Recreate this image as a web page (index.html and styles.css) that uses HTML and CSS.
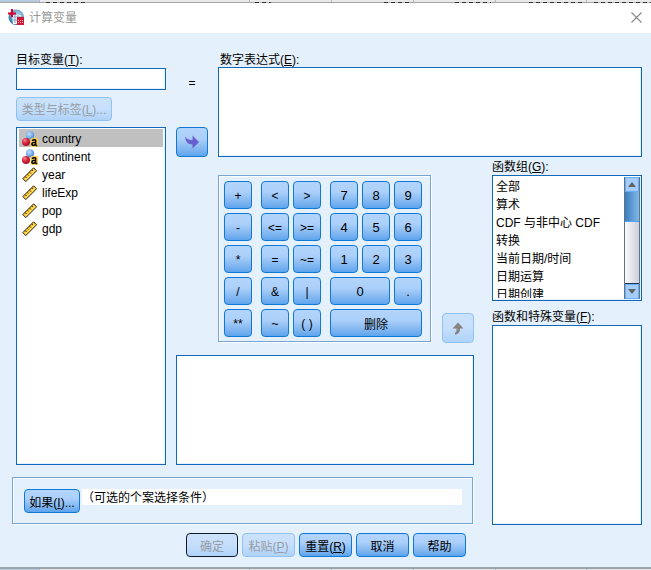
FILE: index.html
```html
<!DOCTYPE html>
<html lang="zh-CN">
<head>
<meta charset="utf-8">
<title>计算变量</title>
<link rel="stylesheet" href="styles.css">
</head>
<body>
<svg class="defs" width="0" height="0" aria-hidden="true">
  <defs>
    <radialGradient id="red" cx=".35" cy=".3" r=".75"><stop offset="0" stop-color="#f58b98"/><stop offset=".45" stop-color="#d92842"/><stop offset="1" stop-color="#a50c24"/></radialGradient>
    <radialGradient id="blue" cx=".4" cy=".35" r=".7"><stop offset="0" stop-color="#c4e0fb"/><stop offset=".6" stop-color="#76adea"/><stop offset="1" stop-color="#3c7ac6"/></radialGradient>
    <radialGradient id="globe" cx=".6" cy=".35" r=".7"><stop offset="0" stop-color="#b4d6ec"/><stop offset="1" stop-color="#2e71a8"/></radialGradient>
    <symbol id="nominal" viewBox="0 0 16 16">
      <circle cx="8" cy="4.3" r="4.1" fill="url(#blue)"/>
      <circle cx="4" cy="11" r="4" fill="url(#red)"/>
      <rect x="8.6" y="7" width="7.4" height="9" rx="1.5" fill="#ffd047"/>
      <path d="M10 9.6Q12 8 13.6 9.2V14.6M13.6 11.6H11.4Q9.8 11.8 9.9 13.2Q10.4 14.8 12.2 14.2L13.6 13M13.6 14.5H15.3" fill="none" stroke="#000" stroke-width="1.5"/>
    </symbol>
    <symbol id="scale" viewBox="0 0 16 16">
      <path d="M.8 11.6 11.6.8 14.6 3.8 3.8 14.6Z" fill="#ffcb2e" stroke="#222" stroke-width="1"/>
      <path d="M3.2 9.6 4.6 11M5.4 7.4 6.4 8.4M7.6 5.2 9 6.6M9.8 3 10.8 4" stroke="#222" stroke-width="1"/>
      <path d="M3.6 12.8 12.8 3.6" stroke="#fff3a9" stroke-dasharray="2 1"/>
    </symbol>
  </defs>
</svg>
<div class="sheet sheet-top"><i class="head"></i><i class="c1"><b class="ink short"></b></i><i class="c2"><b class="ink tiny"></b></i><i class="c3"><b class="ink year"></b></i><i class="c4"><b class="ink num"></b></i><i class="c5"><b class="ink long"></b></i><i class="c6"><b class="ink wide"></b></i></div>
<header class="titlebar">
  <svg class="app" width="17" height="17" viewBox="0 0 17 17">
    <circle cx="8.3" cy="8.3" r="7.8" fill="url(#globe)"/>
    <path d="M4 6H13V15H5Z" fill="#edf5fb"/>
    <path d="M5 8H13M5 11H10M7 6V14M10 6V13" stroke="#8cacc6"/>
    <path d="M0 4.5H8M4 0V8" stroke="#d9002b" stroke-width="2"/>
    <path d="M9 8H16V16H9Z" fill="#d01837"/>
    <path d="M10 11.5H16M10 13.5H16" stroke="#f3bcc5" stroke-dasharray="1 1"/>
  </svg>
  <h1>计算变量</h1>
  <svg class="close" width="11" height="11" viewBox="0 0 11 11"><path d="M.5.5 10.5 10.5M10.5.5.5 10.5" stroke="#888" stroke-width="1.1"/></svg>
</header>
<main>
  <section class="variables">
    <label>目标变量(<u>T</u>):</label>
    <div class="box target"></div>
    <button class="btn off type">类型与标签(<u>L</u>)...</button>
    <ul class="box varlist">
      <li class="selected"><svg><use href="#nominal"/></svg>country</li>
      <li><svg><use href="#nominal"/></svg>continent</li>
      <li><svg><use href="#scale"/></svg>year</li>
      <li><svg><use href="#scale"/></svg>lifeExp</li>
      <li><svg><use href="#scale"/></svg>pop</li>
      <li><svg><use href="#scale"/></svg>gdp</li>
    </ul>
  </section>
  <section class="expression">
    <div class="assign"><span>=</span>
      <button class="btn arrow" aria-label="移动"><svg width="16" height="14" viewBox="0 0 16 14"><path d="M1 1.5Q3 5 8.5 5V.5L15 7 8.5 13.5V9.5Q1.5 9.5 1 1.5Z" fill="#6860cf"/></svg></button>
    </div>
    <div class="formula"><label>数字表达式(<u>E</u>):</label><div class="box formula-box"></div></div>
  </section>
  <section class="operators">
    <div class="pad-row">
      <div class="frame keypad">
        <div class="keys one"><button class="btn">+</button><button class="btn">-</button><button class="btn">*</button><button class="btn">/</button><button class="btn">**</button></div>
        <div class="keys two"><button class="btn">&lt;</button><button class="btn">&gt;</button><button class="btn">&lt;=</button><button class="btn">&gt;=</button><button class="btn">=</button><button class="btn">~=</button><button class="btn">&amp;</button><button class="btn">|</button><button class="btn">~</button><button class="btn">( )</button></div>
        <div class="keys three"><button class="btn">7</button><button class="btn">8</button><button class="btn">9</button><button class="btn">4</button><button class="btn">5</button><button class="btn">6</button><button class="btn">1</button><button class="btn">2</button><button class="btn">3</button><button class="btn zero">0</button><button class="btn">.</button><button class="btn delete">删除</button></div>
      </div>
      <button class="btn off arrow" aria-label="上移"><svg width="12" height="13" viewBox="0 0 12 13"><path d="M6 .5 11.5 6.5H8Q8.5 11.5 3 12.8V11Q5 10 4.6 6.5H.5Z" fill="#858585"/></svg></button>
    </div>
    <div class="box description"></div>
  </section>
  <section class="functions">
    <label>函数组(<u>G</u>):</label>
    <div class="box groups">
      <ul><li>全部</li><li>算术</li><li>CDF 与非中心 CDF</li><li>转换</li><li>当前日期/时间</li><li>日期运算</li><li>日期创建</li></ul>
      <div class="scroll"><i class="step up"></i><i class="thumb"></i><i class="track"></i><i class="step down"></i></div>
    </div>
    <label class="special">函数和特殊变量(<u>F</u>):</label>
    <div class="box specials"></div>
  </section>
  <section class="frame condition"><button class="btn">如果(<u>I</u>)...</button><div class="hint">（可选的个案选择条件）</div></section>
</main>
<footer>
  <button class="btn off default">确定</button>
  <button class="btn off">粘贴(<u>P</u>)</button>
  <button class="btn">重置(<u>R</u>)</button>
  <button class="btn">取消</button>
  <button class="btn">帮助</button>
</footer>
<div class="sheet sheet-bottom"><i class="head"></i><i class="c1"></i><i class="c2"></i><i class="c3"></i><i class="c4"></i><i class="c5"></i><i class="c6"></i></div>
</body>
</html>
```
FILE: styles.css
```css
* { box-sizing: border-box; }
body {
  margin: 0; width: 651px; height: 570px; overflow: hidden;
  display: flex; flex-direction: column;
  background: #e4f0fc; color: #000;
  font: 12px/16px "Liberation Sans", "Noto Sans CJK SC", sans-serif;
}
.defs { position: absolute; }
ul { list-style: none; margin: 0; padding: 0; }
u { text-underline-offset: 1px; text-decoration-thickness: 1px; }
label { display: block; height: 16px; white-space: nowrap; }

.sheet { display: flex; height: 3px; flex: none; background: #e9e9e9; }
.sheet i { display: block; height: 100%; border-right: 1px solid #a9bccd; }
.sheet-top { border-bottom: 1px solid #a6a6a6; }
.sheet-bottom { border-top: 2px solid #9ca4ab; margin-top: auto; }
.sheet .head { width: 40px; background: #b9cbdf; }
.sheet .c1 { width: 210px; }
.sheet .c2 { width: 82px; }
.sheet .c3 { width: 82px; }
.sheet .c4 { width: 82px; }
.sheet .c5 { width: 91px; }
.sheet .c6 { flex: 1; border: 0; }
.ink { display: block; height: 1px; margin: 2px 4px 0 auto; background: repeating-linear-gradient(90deg, #333 0 4px, #bbb 4px 7px); }
.short { width: 40px; margin-left: 6px; }
.tiny { width: 16px; margin-left: 5px; }
.year { width: 25px; }
.num { width: 36px; }
.long { width: 53px; }
.wide { width: 57px; margin-right: 0; }

.titlebar { height: 30px; flex: none; display: flex; align-items: center; background: #fff; padding: 0 9px 0 8px; color: #999; }
.titlebar h1 { margin: 0 auto 0 4px; font-size: 12px; font-weight: 400; }
.titlebar .app { margin-bottom: 2px; }
.titlebar .close { margin-bottom: 2px; }

main {
  display: grid; margin: 17px 9px 0 12px; height: 475px; flex: none;
  grid-template-columns: 154px 10px 298px 18px 150px;
  grid-template-rows: 108px 307px 12px 48px;
}
.variables { grid-area: 1 / 1 / 3 / 2; padding-left: 4px; display: flex; flex-direction: column; }
.expression { grid-area: 1 / 3 / 2 / 6; display: flex; gap: 10px; }
.operators { grid-area: 2 / 3 / 3 / 4; padding-top: 17px; }
.functions { grid-area: 2 / 5 / 5 / 6; }
.condition { grid-area: 4 / 1 / 5 / 4; }

.box { background: #fff; border: 1px solid #1468b8; box-shadow: inset -1px -1px #e4f0fc; }
.frame { border: 1px solid #76a5d5; box-shadow: inset 1px 1px #fff, 1px 1px #fff; }
.btn {
  display: flex; align-items: center; justify-content: center;
  padding: 2px 0 0; border: 1px solid #0f79d8; border-radius: 4px;
  background: linear-gradient(#b3d4fb, #acd0fa 38%, #7cb3ef 80%, #5ca4ed);
  color: #000; font: inherit; white-space: pre;
}
.off { color: #969da5; border-color: #8fc1f1; background: linear-gradient(#cbe2fc, #c6dffb 50%, #aed3fa); }

.variables label { padding-top: 2px; height: 18px; }
.target { height: 22px; }
.type { width: 96px; height: 24px; margin: 7px 0 6px; }
.varlist { height: 338px; padding: 1px 2px; }
.varlist li { height: 18px; display: flex; align-items: center; gap: 4px; padding: 2px 0 0 3px; line-height: 16px; }
.varlist svg { width: 16px; height: 16px; flex: none; }
.selected { background: #c0c0c0; }

.assign { width: 32px; display: flex; flex-direction: column; justify-content: space-between; align-items: center; padding: 25px 0 1px; }
.arrow { width: 32px; height: 30px; flex: none; padding: 0; }
.formula { flex: 1; }
.formula label { height: 17px; padding: 2px 0 0 2px; }
.formula-box { height: 90px; }

.pad-row { display: flex; align-items: flex-end; justify-content: space-between; padding-left: 42px; height: 168px; }
.keypad { width: 213px; height: 167px; display: flex; gap: 9px; padding: 5px; margin-bottom: 1px; }
.keys { display: grid; gap: 4px; grid-auto-rows: 28px; align-content: start; }
.keys .btn { padding-top: 1px; }
.one { grid-template-columns: 28px; }
.two { grid-template-columns: repeat(2, 28px); }
.three { grid-template-columns: repeat(3, 28px); font-size: 13px; }
.zero { grid-column: span 2; }
.keys .delete { grid-column: span 3; font-size: 12px; padding-top: 3px; }
.description { height: 110px; margin-top: 12px; }

.functions label { height: 17px; padding-top: 1px; }
.groups { display: flex; justify-content: space-between; height: 126px; padding: 1px; }
.groups ul { height: 121px; overflow: hidden; padding: 1px 0 0 2px; }
.groups li { height: 18px; line-height: 18px; white-space: nowrap; }
.scroll { width: 16px; height: 122px; display: flex; flex-direction: column; border: 1px solid #65737f; border-width: 0 1px; }
.step { height: 15px; display: flex; align-items: center; justify-content: center; background: #a5cdfa; border: 1px solid #68aff8; }
.step::after { content: ""; border: 4px solid transparent; }
.up::after { border-bottom: 5px solid #626262; border-top: 0; }
.down::after { border-top: 5px solid #626262; border-bottom: 0; }
.thumb { height: 30px; background: linear-gradient(90deg, #397fc0, #83b7e6); border-bottom: 1px solid #4ba3fb; }
.track { flex: 1; background: linear-gradient(90deg, #fafafd, #cfceda); border-bottom: 1px solid #223a5a; }
.functions .special { margin-top: 7px; }
.specials { height: 200px; }

.condition { height: 47px; width: 461px; display: flex; align-items: flex-start; gap: 2px; padding: 11px 10px 0 11px; }
.condition .btn { width: 56px; height: 24px; flex: none; padding-top: 3px; }
.hint { flex: 1; height: 16px; padding-top: 1px; background: #fff; }

footer { display: flex; gap: 4px; margin: 8px 0 0 186px; }
footer .btn { width: 53px; height: 24px; padding-top: 3px; }
footer .default { width: 52px; border-color: #111b2a; }
```
